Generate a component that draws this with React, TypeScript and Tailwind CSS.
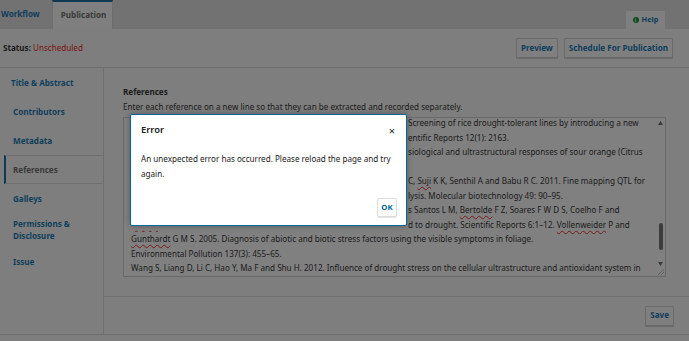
import React from "react";

const BLUE = "text-[#0f3e5c]";

function NavItem({ label, active, first }: { label: React.ReactNode; active?: boolean; first?: boolean }) {
  return (
    <div
      className={
        "flex items-center min-h-[29px] py-[5px] leading-[12px] text-[8.1px] font-bold " +
        (active
          ? "border-y border-l-2 border-y-[#6f6f6f] border-l-[#0e3a55] ml-[4px] pl-[7px] text-[#3a3a3a]"
          : (first ? "pl-[11px] " : "pl-[13px] ") + BLUE)
      }
    >
      {label}
    </div>
  );
}

const Squig = ({ children }: { children: React.ReactNode }) => (
  <span className="underline decoration-wavy decoration-[#7a1a1a] decoration-[1px] underline-offset-[2px]">{children}</span>
);

const lines: [React.ReactNode, React.ReactNode][] = [
  ["Chen D, Wang S, Xiong B, Cao B and Deng X. 2022.", <> Screening of rice drought-tolerant lines by introducing a new</>],
  ["rice drought resistance evaluation method. Sci", <>entific Reports 12(1): 2163.</>],
  ["Ghaderi N, Normohammadi S and Javadi T. 2019. Phy", <>siological and ultrastructural responses of sour orange (Citrus</>],
  ["aurantium L.) to drought stress.", ""],
  ["Gomez S M, Boopathi N M, Kumar S S, Ramasubramanian T,", <>C, <Squig>Suji</Squig> K K, Senthil A and Babu R C. 2011. Fine mapping QTL for</>],
  ["drought tolerance in rice using bulk segregant ana", <>lysis. Molecular biotechnology 49: 90–95.</>],
  ["Souza D A, Gomes F P, Brito L L, Pirovani C P, do", <>s Santos L M, <Squig>Bertolde</Squig> F Z, Soares F W D S, Coelho F and</>],
  [
    <span className="text-transparent"><Squig>Micheli</Squig> F. 2016. Proteomic response of cocoa subjecte</span>,
    <>d to drought. Scientific Reports 6:1–12. <Squig>Vollenweider</Squig> P and</>,
  ],
];

const btn =
  "h-[20px] px-[4px] flex items-center border border-[#6a6a6a] bg-[#7f7f7f] rounded-[1px] text-[8.1px] font-bold shadow-[0_1px_0_#6a6a6a] " +
  BLUE;

export default function App() {
  return (
    <div className="relative w-[689px] h-[341px] overflow-hidden bg-[#7e7e7e] font-['Noto_Sans',sans-serif] text-[#1b1b1b]">
      {/* top tabs */}
      <div className="h-[29px] bg-[#727272] flex items-stretch relative">
        <div className={"flex items-center pl-[1px] pr-[12px] text-[8.1px] font-bold " + BLUE}>Workflow</div>
        <div className="flex items-center px-[8px] w-[61px] bg-[#7f7f7f] border-t-2 border-t-[#0e3a55] border-x border-x-[#6e6e6e] text-[8.1px] font-bold text-[#3a3a3a]">
          Publication
        </div>
        <div className="flex-1" />
        <div className="self-end mr-[24px] h-[18px] w-[39px] bg-[#7f7f7f] flex items-center justify-center gap-[3px] text-[7.4px] font-bold text-[#0f3e5c]">
          <span className="w-[6px] h-[6px] rounded-full bg-[#0b4d22] text-[#7f7f7f] text-[5px] leading-[6px] text-center font-bold">i</span>
          Help
        </div>
      </div>

      {/* status row */}
      <div className="h-[39px] border-b border-[#6e6e6e] flex items-center px-[3px]">
        <div className="text-[8.1px] font-bold text-[#1b1b1b]">
          Status: <span className="font-normal text-[#7a1414]">Unscheduled</span>
        </div>
        <div className="flex-1" />
        <div className="flex gap-[6px] mr-[13px]">
          <div className={btn}>Preview</div>
          <div className={btn}>Schedule For Publication</div>
        </div>
      </div>

      {/* body */}
      <div className="flex h-[267px] border-b border-[#6e6e6e]">
        <div className="w-[104px] shrink-0 border-r border-[#6e6e6e]">
          <NavItem first label="Title & Abstract" />
          <NavItem label="Contributors" />
          <NavItem label="Metadata" />
          <NavItem active label="References" />
          <NavItem label="Galleys" />
          <NavItem label={<span>Permissions &amp;<br />Disclosure</span>} />
          <NavItem label="Issue" />
        </div>
        <div className="flex-1 flex flex-col">
          <div className="pl-[19px] pr-[23px] pt-[18px]">
            <div className="text-[8.1px] font-bold leading-[12px]">References</div>
            <div className="text-[8.1px] leading-[12px] mt-[3px]">Enter each reference on a new line so that they can be extracted and recorded separately.</div>
            <div className="mt-[4px] h-[160px] border border-[#6a6a6a] bg-[#808080] flex overflow-hidden">
              <div className="flex-1 pl-[7px] -mt-[2px] text-[8.1px] leading-[14.5px] overflow-hidden">
                {lines.map(([a, b], i) => (
                  <div key={i} className="grid grid-cols-[277px_1fr] whitespace-nowrap">
                    <div className="overflow-hidden">{a}</div>
                    <div>{b}</div>
                  </div>
                ))}
                <div className="whitespace-nowrap"><Squig>Gunthardt</Squig> G M S. 2005. Diagnosis of abiotic and biotic stress factors using the visible symptoms in foliage.</div>
                <div className="whitespace-nowrap">Environmental Pollution 137(3): 455–65.</div>
                <div className="whitespace-nowrap">Wang S, Liang D, Li C, Hao Y, Ma F and Shu H. 2012. Influence of drought stress on the cellular ultrastructure and antioxidant system in</div>
              </div>
              <div className="w-[9px] flex flex-col items-center pt-[3px] pb-[1px]">
                <svg width="5" height="4" viewBox="0 0 5 4"><path d="M2.5 0L5 4H0z" fill="#3a3a3a" /></svg>
                <div className="flex-1" />
                <div className="w-[4px] h-[27px] rounded-full bg-[#3c3c3c]" />
                <div className="h-[12px]" />
                <svg width="5" height="4" viewBox="0 0 5 4"><path d="M0 0H5L2.5 4z" fill="#3a3a3a" /></svg>
                <svg className="mt-[2px]" width="8" height="7" viewBox="0 0 8 7"><path d="M7 1L1 7M7 4L4 7" stroke="#5a5a5a" strokeWidth="0.8" /></svg>
              </div>
            </div>
          </div>
          <div className="flex-1" />
          <div className="border-t border-[#6e6e6e] h-[38px] flex items-center justify-end pr-[15px]">
            <div className={btn}>Save</div>
          </div>
        </div>
      </div>

      {/* modal */}
      <div className="absolute left-[130px] top-[114px] w-[277px] h-[112px] bg-white border-[1.5px] border-[#006798] rounded-[2px] shadow-[0_0_6px_rgba(0,0,0,0.3)] flex flex-col px-[10px]">
        <div className="flex items-center justify-between h-[29px] pt-[1px]">
          <span className="text-[9.4px] font-semibold text-[#222]">Error</span>
          <span className="text-[11px] text-[#222] leading-none mr-[1px]">×</span>
        </div>
        <div className="text-[8.1px] leading-[15px] text-[#222] mt-[7px]">
          An unexpected error has occurred. Please reload the page and try again.
        </div>
        <div className="flex-1" />
        <div className="flex justify-end mb-[8px] mr-[-1px]">
          <div className="w-[20px] h-[19px] border border-[#dcdcdc] rounded-[2px] flex items-center justify-center text-[7.8px] font-bold text-[#006798] shadow-[0_1px_0_#e4e4e4]">OK</div>
        </div>
      </div>
    </div>
  );
}
